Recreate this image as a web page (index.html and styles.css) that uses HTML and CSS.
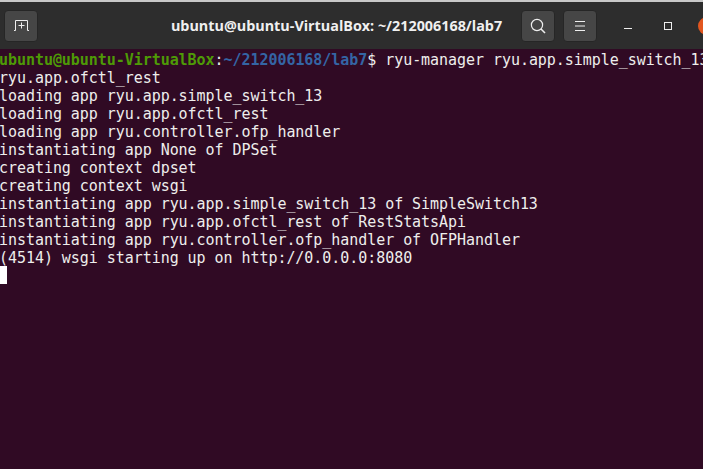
FILE: index.html
```html
<!DOCTYPE html>
<html lang="en">
<head>
<meta charset="utf-8">
<title>ubuntu@ubuntu-VirtualBox: ~/212006168/lab7</title>
<link rel="stylesheet" href="styles.css">
</head>
<body>
<div class="window">
  <header class="titlebar">
    <div class="btn new-tab">
      <svg width="15" height="11" viewBox="0 0 15 11" fill="none" stroke="#eeeeee" stroke-width="1"><path d="M0 10.5h1.5V.5h12v10H15M7.5 2.5v6M4.5 5.5h6"/></svg>
    </div>
    <div class="title">ubuntu@ubuntu-VirtualBox: ~/212006168/lab7</div>
    <div class="btn">
      <svg width="16" height="16" viewBox="0 0 16 16" fill="none" stroke="#eeeeee" stroke-width="1.2"><circle cx="7" cy="7" r="5.6"/><path d="M11 11l4 4" stroke-width="1.6"/></svg>
    </div>
    <div class="btn menu">
      <svg width="10" height="10" viewBox="0 0 10 10" fill="none" stroke="#eeeeee" stroke-width="1"><path d="M0 .5h10M0 5h10M0 9.5h10"/></svg>
    </div>
    <div class="win-controls">
      <span class="minimize"></span>
      <span class="maximize"></span>
      <span class="close"></span>
    </div>
  </header>
  <main class="terminal"><div class="line prompt-line"><span class="user">ubuntu@ubuntu-VirtualBox</span>:<span class="path">~/212006168/lab7</span>$ ryu-manager ryu.app.simple_switch_13</div><div class="line">ryu.app.ofctl_rest</div><div class="line">loading app ryu.app.simple_switch_13</div><div class="line">loading app ryu.app.ofctl_rest</div><div class="line">loading app ryu.controller.ofp_handler</div><div class="line">instantiating app None of DPSet</div><div class="line">creating context dpset</div><div class="line">creating context wsgi</div><div class="line">instantiating app ryu.app.simple_switch_13 of SimpleSwitch13</div><div class="line">instantiating app ryu.app.ofctl_rest of RestStatsApi</div><div class="line">instantiating app ryu.controller.ofp_handler of OFPHandler</div><div class="line">(4514) wsgi starting up on http://0.0.0.0:8080</div><div class="cursor"></div></main>
</div>
</body>
</html>
```
FILE: styles.css
```css
html, body {
  margin: 0;
  padding: 0;
  height: 100%;
  overflow: hidden;
  background: #300a24;
}
.window {
  width: 703px;
  height: 469px;
  display: flex;
  flex-direction: column;
  overflow: hidden;
}
.titlebar {
  flex: none;
  height: 47px;
  border-top: 2px solid #c8c8c8;
  background: #2d2d2d;
  display: flex;
  align-items: center;
  padding: 0 0 0 4px;
  box-sizing: content-box;
  gap: 8px;
}
.btn {
  flex: none;
  width: 34px;
  height: 32px;
  background: #464646;
  border-radius: 4px;
  border: 1px solid #262626;
  box-sizing: border-box;
  display: flex;
  align-items: center;
  justify-content: center;
}
.title {
  flex: 1;
  text-align: center;
  font: 700 14.35px/18px "Open Sans", sans-serif;
  color: #f0f0f0;
  white-space: nowrap;
  padding-left: 114px;
}
.win-controls {
  flex: none;
  width: 106px;
  height: 32px;
  margin-left: -8px;
  position: relative;
  overflow: hidden;
}
.minimize {
  position: absolute;
  left: 27px;
  top: 18px;
  width: 8px;
  height: 1px;
  background: #eeeeee;
}
.maximize {
  position: absolute;
  left: 67px;
  top: 12px;
  width: 6px;
  height: 6px;
  border: 1px solid #eeeeee;
}
.close {
  position: absolute;
  left: 101px;
  top: 7px;
  width: 18px;
  height: 18px;
  border-radius: 50%;
  background: #e2561f;
}
.terminal {
  flex: 1;
  background: #300a24;
  color: #eeeeec;
  font: 400 15px/18px "DejaVu Sans Mono", monospace;
  letter-spacing: -0.05px;
  overflow: hidden;
  padding-top: 2px;
}
.line {
  height: 18px;
  white-space: nowrap;
  margin-left: -1px;
}
.user {
  color: #4e9a06;
  font-weight: 700;
}
.path {
  color: #3465a4;
  font-weight: 700;
}
.cursor {
  width: 7px;
  height: 18px;
  margin-top: -1px;
  background: #ffffff;
}
```
